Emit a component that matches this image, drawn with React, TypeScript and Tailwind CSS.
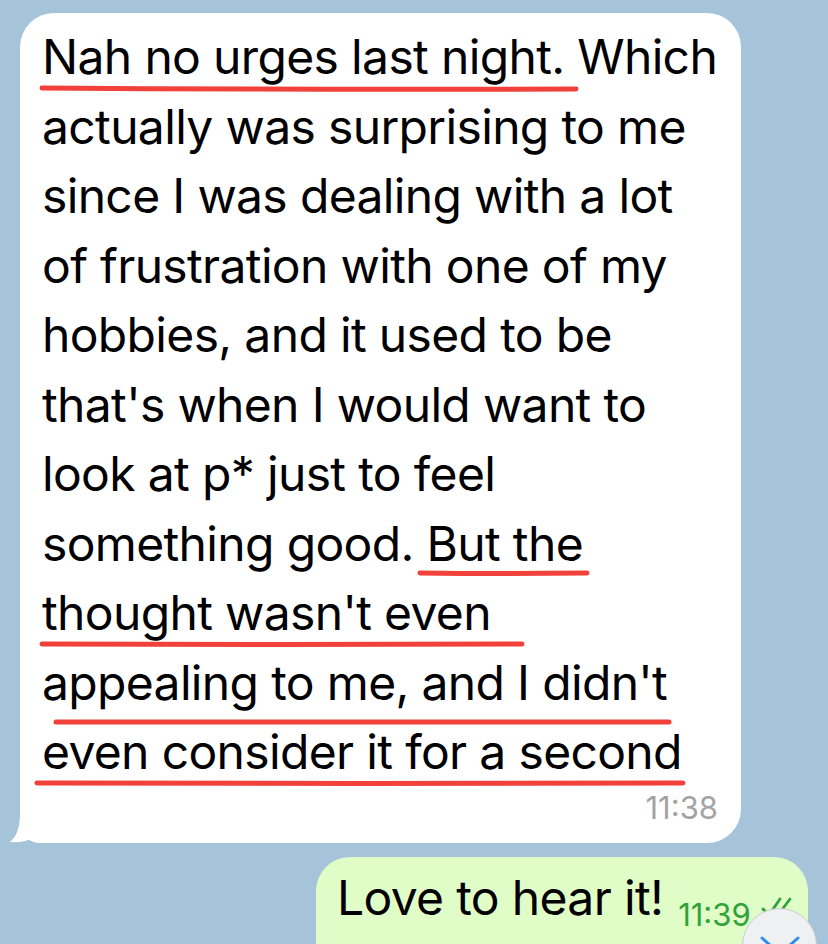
import React from 'react';

const lines = [
  'Nah no urges last night. Which',
  'actually was surprising to me',
  'since I was dealing with a lot',
  'of frustration with one of my',
  'hobbies, and it used to be',
  "that's when I would want to",
  'look at p* just to feel',
  'something good. But the',
  "thought wasn't even",
  "appealing to me, and I didn't",
  'even consider it for a second',
];

// hand-drawn red marks, in bubble coordinates
const marks = [
  'M22 75 Q290 77 556 76',
  'M400 560 Q484 561 567 560',
  'M22 631 Q262 632 502 631',
  'M36 709 Q342 710 649 709',
  'M17 770 Q340 771 663 770',
];

const Incoming = () => {
  return (
    <div className="relative ml-[20px] mt-[13px] w-[721px] rounded-[34px] rounded-bl-[20px] bg-white pl-[22px] pr-[23px] pt-[9px] pb-[17px]">
      <div className="text-[48px] leading-[69.5px] text-black tracking-[-0.65px]">
        {lines.map((l) => (
          <div key={l} className="whitespace-nowrap">{l}</div>
        ))}
      </div>
      <div className="flex justify-end mt-[3px] text-[31px] leading-[36px] text-[#a3a3a3]">11:38</div>

      <svg className="absolute left-0 top-0" width="721" height="828" fill="none">
        {marks.map((d) => (
          <path key={d} d={d} stroke="#f2403a" strokeWidth="5" strokeLinecap="round" />
        ))}
      </svg>

      <svg className="absolute -left-[11px] bottom-0" width="40" height="30" viewBox="0 0 40 30">
        <path d="M11 0 C11 14 8 23 1 29 C8 30 16 29 24 25 L24 0 Z" fill="#ffffff" />
      </svg>
    </div>
  );
};

const Outgoing = () => {
  return (
    <div className="relative ml-[316px] mt-[14px] w-[492px] h-[100px] rounded-t-[34px] bg-[#e0fcc7] pl-[21px] pt-[11px]">
      <div className="flex items-start">
        <span className="text-[48px] leading-[60px] text-black tracking-[-0.65px] whitespace-nowrap">Love to hear it!</span>
        <span className="ml-[15px] mt-[29px] text-[31px] leading-[36px] text-[#2fa33a]">11:39</span>
        <svg className="ml-[10px] mt-[28px]" width="32" height="24" viewBox="0 0 32 24" fill="none">
          <path d="M2 13 L8 19 L19 3" stroke="#2fa33a" strokeWidth="2.8" strokeLinecap="round" strokeLinejoin="round" />
          <path d="M14 16 L17 19 L29 3" stroke="#2fa33a" strokeWidth="2.8" strokeLinecap="round" strokeLinejoin="round" />
        </svg>
      </div>
    </div>
  );
};

export default function App() {
  return (
    <div className="relative h-[944px] w-[828px] overflow-hidden bg-[#a5c3d9] font-['Inter',sans-serif]">
      <Incoming />
      <Outgoing />
      <div className="absolute left-[742px] top-[908px] flex h-[75px] w-[75px] items-center justify-center rounded-full border border-[#c9cccf] bg-[#eef0f2]">
        <svg width="44" height="24" viewBox="0 0 44 24" fill="none">
          <path d="M4 4 L22 20 L40 4" stroke="#2f8bf0" strokeWidth="3" strokeLinecap="round" strokeLinejoin="round" />
        </svg>
      </div>
    </div>
  );
}
